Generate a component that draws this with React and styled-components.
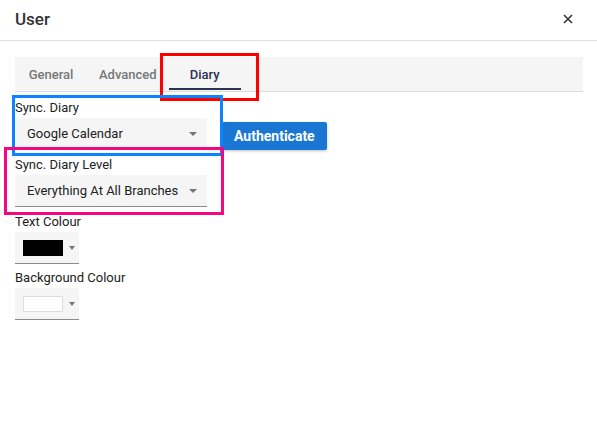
import React from 'react';
import styled, { createGlobalStyle } from 'styled-components';

const GlobalStyle = createGlobalStyle`
  body {
    margin: 0;
    background: #fff;
    font-family: Roboto, "Liberation Sans", sans-serif;
    color: #212121;
  }
`;

const Dialog = styled.div`
  position: relative;
  width: 597px;
  height: 431px;
  background: #fff;
`;

const Header = styled.div`
  display: flex;
  align-items: center;
  justify-content: space-between;
  height: 41px;
  box-sizing: border-box;
  padding: 0 22px 3px 15px;
  border-bottom: 1px solid #e0e0e0;
`;

const Title = styled.div`
  font-size: 17px;
  font-weight: 500;
  color: #333;
`;

const CloseButton = styled.button`
  display: flex;
  align-items: center;
  justify-content: center;
  width: 14px;
  height: 14px;
  padding: 0;
  border: 0;
  background: none;
  color: #333;
  cursor: pointer;
`;

const Body = styled.div`
  padding: 16px 14px 0 15px;
`;

const TabBar = styled.div`
  display: flex;
  height: 34px;
  background: #f5f5f5;
  border-bottom: 1px solid #ddd;
`;

const Tab = styled.div`
  position: relative;
  display: flex;
  align-items: center;
  justify-content: center;
  min-width: 72px;
  padding: 0 12px;
  box-sizing: border-box;
  font-size: 13px;
  font-weight: 500;
  color: ${(p) => (p.$active ? '#2b3352' : '#777')};

  &::after {
    content: '';
    display: ${(p) => (p.$active ? 'block' : 'none')};
    position: absolute;
    left: 0;
    right: 0;
    bottom: 1px;
    height: 2px;
    background: #2b3352;
  }
`;

const Field = styled.div`
  display: flex;
  flex-direction: column;
  margin-top: ${(p) => p.$top || 8}px;
`;

const Label = styled.div`
  font-size: 13px;
  line-height: 14px;
  color: #222;
  margin-bottom: 3px;
`;

const Row = styled.div`
  display: flex;
  align-items: flex-end;
  gap: 15px;
`;

const Select = styled.div`
  display: flex;
  align-items: center;
  justify-content: space-between;
  width: 192px;
  height: 32px;
  box-sizing: border-box;
  padding: 0 10px 0 12px;
  background: #f5f5f5;
  border-bottom: 1px solid #8a8a8a;
  font-size: 13px;
  color: #222;
`;

const Caret = styled.span`
  width: 0;
  height: 0;
  border-left: 4px solid transparent;
  border-right: 4px solid transparent;
  border-top: 4px solid #757575;
`;

const SmallCaret = styled(Caret)`
  border-left-width: 3.5px;
  border-right-width: 3.5px;
  border-top-width: 4px;
  margin-right: 2px;
`;

const Button = styled.button`
  height: 28px;
  padding: 0 12px;
  border: 0;
  border-radius: 2px;
  background: #1976d2;
  color: #fff;
  font-family: inherit;
  font-size: 14px;
  font-weight: 700;
  box-shadow: 0 1px 3px rgba(0, 0, 0, 0.25);
`;

const ColourPicker = styled.div`
  display: flex;
  align-items: center;
  justify-content: space-between;
  width: 64px;
  height: 32px;
  box-sizing: border-box;
  padding: 0 2px 0 8px;
  background: #f5f5f5;
  border-bottom: 1px solid #8a8a8a;
`;

const Swatch = styled.span`
  width: 40px;
  height: 16px;
  box-sizing: border-box;
  background: ${(p) => p.$colour};
  border: 1px solid ${(p) => (p.$colour === '#fff' ? '#ddd' : p.$colour)};
`;

const Annotation = styled.div`
  position: absolute;
  box-sizing: border-box;
  border: 3px solid ${(p) => p.$colour};
  pointer-events: none;
`;

export default function App() {
  return (
    <>
      <GlobalStyle />
      <Dialog>
        <Header>
          <Title>User</Title>
          <CloseButton aria-label="close">
            <svg width="10" height="10" viewBox="0 0 10 10">
              <path d="M1 1L9 9M9 1L1 9" stroke="#333" strokeWidth="1.6" />
            </svg>
          </CloseButton>
        </Header>
        <Body>
          <TabBar>
            <Tab>General</Tab>
            <Tab>Advanced</Tab>
            <Tab $active>Diary</Tab>
          </TabBar>

          <Field $top={9}>
            <Label>Sync. Diary</Label>
            <Row>
              <Select>
                Google Calendar
                <Caret />
              </Select>
              <Button>Authenticate</Button>
            </Row>
          </Field>

          <Field>
            <Label>Sync. Diary Level</Label>
            <Select>
              Everything At All Branches
              <Caret />
            </Select>
          </Field>

          <Field>
            <Label>Text Colour</Label>
            <ColourPicker>
              <Swatch $colour="#000" />
              <SmallCaret />
            </ColourPicker>
          </Field>

          <Field $top={7}>
            <Label>Background Colour</Label>
            <ColourPicker>
              <Swatch $colour="#fff" />
              <SmallCaret />
            </ColourPicker>
          </Field>
        </Body>

        <Annotation $colour="#ff0000" style={{ left: 160, top: 53, width: 99, height: 48 }} />
        <Annotation $colour="#0a84ff" style={{ left: 12, top: 95, width: 211, height: 61 }} />
        <Annotation $colour="#f5077f" style={{ left: 4, top: 147, width: 220, height: 68 }} />
      </Dialog>
    </>
  );
}
